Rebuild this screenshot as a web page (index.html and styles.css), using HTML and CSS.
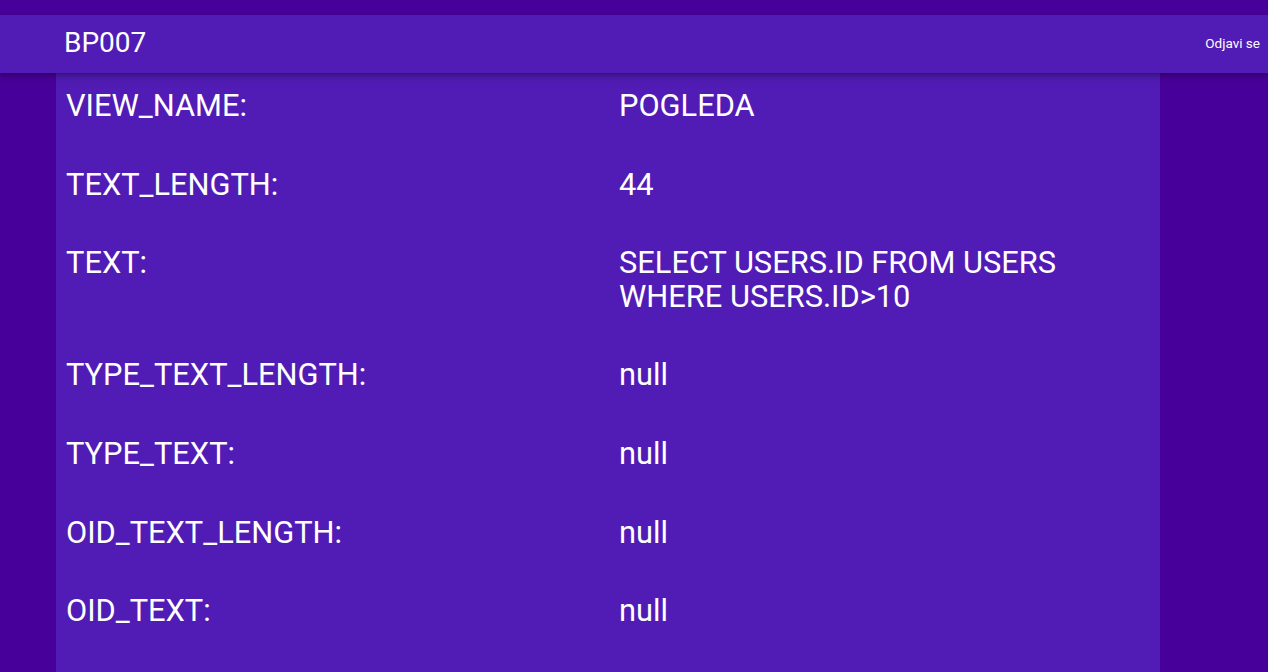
FILE: index.html
```html
<!DOCTYPE html>
<html>
<head>
<meta charset="utf-8">
<link rel="stylesheet" href="styles.css">
</head>
<body>
<div class="page">
  <header class="topbar">
    <div class="brand">BP007</div>
    <div class="logout">Odjavi se</div>
  </header>
  <main class="card">
    <div class="row"><div class="label">VIEW_NAME:</div><div class="value">POGLEDA</div></div>
    <div class="row"><div class="label">TEXT_LENGTH:</div><div class="value">44</div></div>
    <div class="row"><div class="label">TEXT:</div><div class="value">SELECT USERS.ID FROM USERS WHERE USERS.ID&gt;10</div></div>
    <div class="row"><div class="label">TYPE_TEXT_LENGTH:</div><div class="value">null</div></div>
    <div class="row"><div class="label">TYPE_TEXT:</div><div class="value">null</div></div>
    <div class="row"><div class="label">OID_TEXT_LENGTH:</div><div class="value">null</div></div>
    <div class="row"><div class="label">OID_TEXT:</div><div class="value">null</div></div>
  </main>
</div>
</body>
</html>
```
FILE: styles.css
```css
html, body {
  margin: 0;
  padding: 0;
  height: 100%;
  overflow: hidden;
}
body {
  background: #48009b;
  font-family: Roboto, "Liberation Sans", sans-serif;
  color: #ffffff;
}
.page {
  padding-top: 15px;
  display: flex;
  flex-direction: column;
  height: 100%;
  box-sizing: border-box;
}
.topbar {
  position: relative;
  z-index: 2;
  height: 58px;
  background: #511cb5;
  display: flex;
  align-items: center;
  justify-content: space-between;
  padding: 0 8px 0 64px;
  box-shadow: 0 2px 4px rgba(0,0,0,0.25), 0 4px 10px rgba(0,0,0,0.15);
  flex-shrink: 0;
}
.brand {
  font-size: 28px;
  line-height: 32px;
  padding-bottom: 2px;
}
.logout {
  font-size: 13.5px;
  line-height: 16px;
  padding-bottom: 2px;
}
.card {
  width: 1104px;
  margin-left: 56px;
  background: #511cb5;
  flex: 1;
  padding-top: 16px;
  display: flex;
  flex-direction: column;
  gap: 45.4px;
}
.row {
  display: grid;
  grid-template-columns: 1fr 1fr;
  font-size: 30.8px;
  line-height: 33.3px;
}
.label {
  padding: 0 10px;
}
.value {
  padding: 0 9px 0 11px;
}
```
